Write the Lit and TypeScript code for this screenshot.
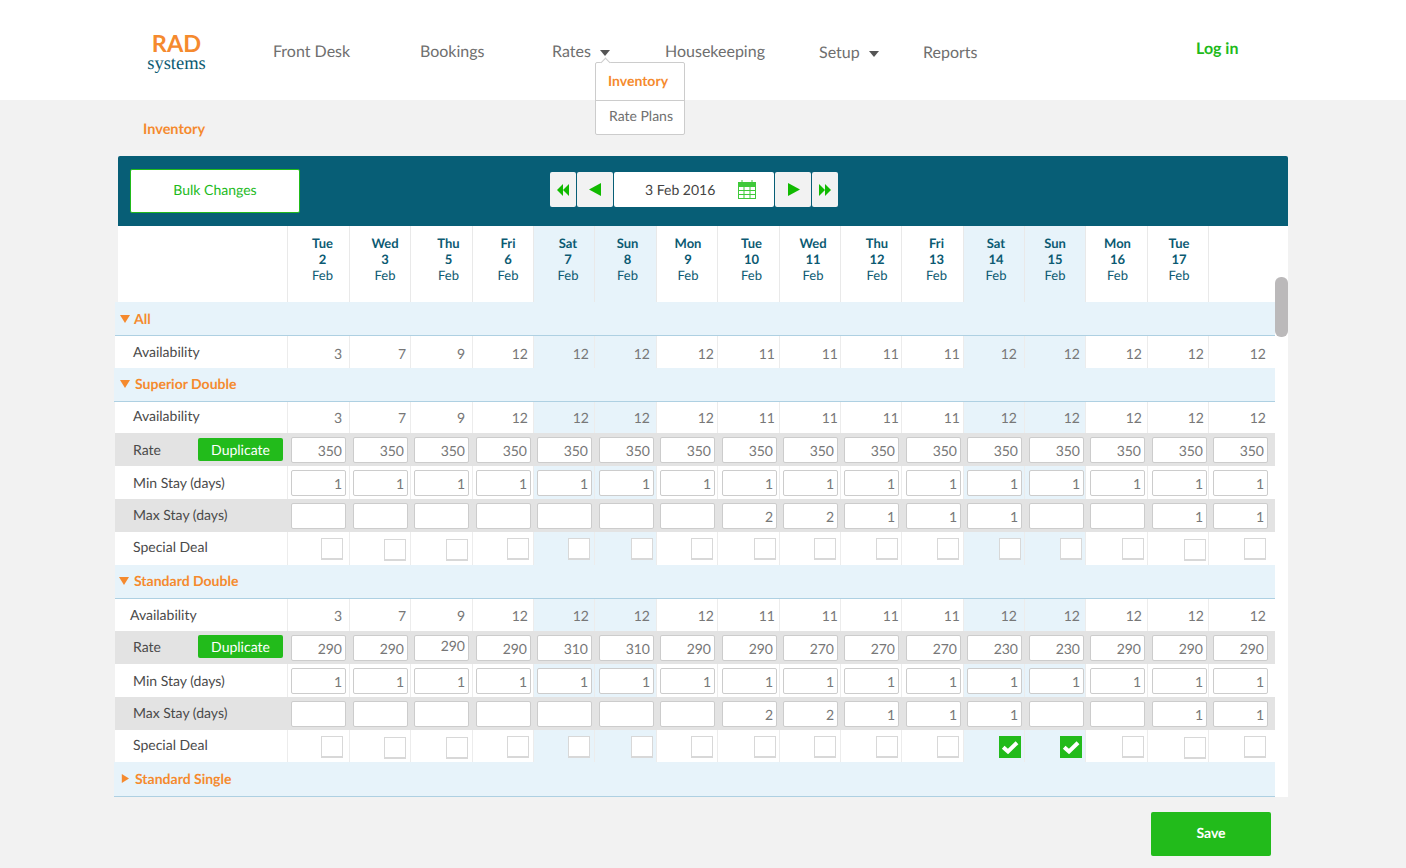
import { LitElement, html, css, svg } from "lit";
import { customElement } from "lit/decorators.js";

const colStart = [287, 349, 410, 472, 533, 594, 656, 717, 779, 840, 901, 963, 1024, 1085, 1147, 1208];
const colWidths = [62, 61, 62, 61, 61, 62, 61, 62, 61, 61, 62, 61, 61, 62, 61, 66];
const gridCols = "172px " + colWidths.map((w) => w + "px").join(" ");
const inputX = [291, 353, 414, 476, 537, 599, 660, 722, 783, 844, 906, 967, 1029, 1090, 1152, 1213];
const cbX = [321, 384, 446, 507, 568, 631, 691, 754, 814, 876, 937, 999, 1060, 1122, 1184, 1244];
const cbY = [0, 1, 1, 0, 0, 0, 0, 0, 0, 0, 0, 0, 0, 0, 1, 0];
const numRight = [342, 406, 465, 528, 589, 650, 714, 775, 838, 899, 960, 1017, 1080, 1142, 1204, 1266];
const weekend = new Set([4, 5, 11, 12]);
const days = [
  ["Tue", 2, 4], ["Wed", 3, 5], ["Thu", 5, 7], ["Fri", 6, 5], ["Sat", 7, 4], ["Sun", 8, 2], ["Mon", 9, 1], ["Tue", 10, 3],
  ["Wed", 11, 3], ["Thu", 12, 6], ["Fri", 13, 4], ["Sat", 14, 2], ["Sun", 15, 0], ["Mon", 16, 1], ["Tue", 17, 1],
] as [string, number, number][];
const avail = [3, 7, 9, 12, 12, 12, 12, 11, 11, 11, 11, 12, 12, 12, 12, 12];
const maxStay = ["", "", "", "", "", "", "", "2", "2", "1", "1", "1", "", "", "1", "1"];
const minStay = Array(16).fill("1");
const stdRates = [290, 290, 290, 290, 310, 310, 290, 290, 270, 270, 270, 230, 230, 290, 290, 290].map(String);
const supRates = Array(16).fill("350");

@customElement("app-root")
export class AppRoot extends LitElement {
  static styles = css`
    :host { display: block; width: 1406px; height: 868px; overflow: hidden; background: #f2f2f2; font-family: Lato, "Liberation Sans", sans-serif; font-size: 14px; color: #444; text-rendering: geometricPrecision; }
    * { box-sizing: border-box; }
    header { position: relative; height: 100px; background: #fff; display: flex; }
    .logo { margin-left: 147px; padding-top: 33px; display: flex; flex-direction: column; width: 59px; align-items: center; margin-right: 67px; }
    .logo .rad { font-size: 23.5px; font-weight: 700; line-height: 22px; color: #f58a2e; }
    .logo .sys { font-family: "Liberation Serif", serif; font-size: 18.5px; line-height: 15px; color: #0b5a72; margin-top: 2px; }
    nav { display: grid; grid-template-columns: 147px 132px 113px 154px 104px 273px auto; font-size: 16px; color: #6f6f6f; }
    nav .item { padding-top: 42px; line-height: 20px; display: flex; align-items: flex-start; }
    nav .low { padding-top: 43px; }
    nav .login { padding-top: 39px; font-weight: 700; color: #21ba1b; }
    .caret { width: 0; height: 0; border-left: 5.5px solid transparent; border-right: 5.5px solid transparent; border-top: 6px solid #555; margin: 8px 0 0 9px; }
    .dd { position: absolute; left: 595px; top: 62px; width: 90px; height: 73px; background: #fff; border: 1px solid #ccc; border-radius: 2px; z-index: 2; display: flex; flex-direction: column; }
    .dd::before { content: ""; position: absolute; left: 6px; top: -4px; width: 6px; height: 6px; background: #fff; border-left: 1px solid #ccc; border-top: 1px solid #ccc; transform: rotate(45deg); }
    .dd .a { height: 38px; padding: 9px 0 0 12px; color: #f58a2e; font-weight: 700; line-height: 18px; border-bottom: 1px solid #ccc; }
    .dd .b { padding: 6px 0 0 13px; color: #6f6f6f; line-height: 18px; }
    .title { height: 56px; padding: 21px 0 0 143px; color: #f58a2e; font-weight: 700; font-size: 14.5px; line-height: 18px; }
    .toolbar { margin-left: 118px; width: 1170px; height: 70px; background: #075e76; border-radius: 2px 2px 0 0; display: flex; padding: 13px 0 0 12px; }
    .bulk { width: 170px; height: 44px; background: #fff; border: 1px solid #21ba1b; border-radius: 2px; color: #21ba1b; display: flex; align-items: center; justify-content: center; margin-right: 250px; padding-bottom: 3px; }
    .pager { display: flex; gap: 1px; height: 35px; margin-top: 3px; }
    .pbtn { background: #f2f2f2; border-radius: 2px; display: flex; align-items: center; justify-content: center; }
    .w26 { width: 26px; } .w36 { width: 36px; }
    .prev { padding-right: 1px; } .next { padding-left: 1px; }
    .date { width: 160px; background: #fff; border-radius: 2px; display: flex; align-items: center; padding-left: 31px; color: #444; }
    .date svg { margin: 0 0 1px 23px; }
    .panel { display: flex; margin-left: 115px; width: 1173px; height: 571px; }
    .table { width: 1160px; }
    .track { width: 13px; background: #fff; padding-top: 51px; }
    .thumb { height: 60px; background: #bbb9ba; border-radius: 6px; }
    .row { display: grid; }
    .head { margin-left: 3px; height: 76px; background: #fff; }
    .hc { border-left: 1px solid #e9e9e9; background: #fff; color: #0b5a72; font-size: 13px; line-height: 16px; text-align: center; padding-top: 9px; }
    .hc b { display: block; font-weight: 700; }
    .hc span { display: block; }
    .cell.we, .hc.we { background: #e7f3fa; }
    .section { background: #e7f3fa; border-bottom: 1px solid #aed0e2; display: flex; align-items: center; color: #f58a2e; font-weight: 700; font-size: 14px; height: 34px; }
    .out { margin-left: -1px; }
    .data { background: #fff; }
    .lab { padding-left: 18px; display: flex; align-items: center; justify-content: space-between; color: #4a4a4a; padding-right: 4px; }
    .lab.ind { padding-left: 15px; }
    .grey { background: #e3e3e3; }
    .cell { border-left: 1px solid #ececec; display: flex; align-items: center; }
    .grey .cell { border-left: none; }
    .num { justify-content: flex-end; color: #777; }
    .inp { width: 55px; height: 26px; background: #fff; border: 1px solid #ccc; border-radius: 2px; color: #777; text-align: right; padding: 3px 3px 0 0; line-height: 20px; }
    .inp.hi { padding-top: 0; }
    .cb { width: 22px; height: 22px; background: #fff; border: 1px solid #d8d8d8; border-bottom-width: 2px; }
    .cb.on { background: #22bb1b; border: none; display: flex; align-items: center; justify-content: center; }
    .dup { width: 85px; height: 23px; background: #22bb1b; border-radius: 2px; color: #fff; display: flex; align-items: center; justify-content: center; padding-bottom: 1px; }
    .foot { display: flex; justify-content: flex-end; padding: 15px 135px 0 0; }
    .save { width: 120px; height: 44px; background: #22bb1b; border-radius: 2px; color: #fff; font-weight: 700; display: flex; align-items: center; justify-content: center; padding-bottom: 3px; }
  `;

  private heading(name: string, open: boolean, pad: number, gap: number, out: boolean, up: number, h = 34) {
    return html`<div class="section ${out ? "out" : ""}" style="padding-left:${pad}px;padding-bottom:${up}px;height:${h}px;${out ? "width:1161px" : ""}">
      <svg width="${open ? 10 : 8}" height="${open ? 8 : 9}" viewBox="0 0 10 9" style="margin-right:${gap}px" preserveAspectRatio="none">
        ${open ? svg`<polygon points="0,0 10,0 5,9" fill="#f58a2e"/>` : svg`<polygon points="1,0 10,4.5 1,9" fill="#f58a2e"/>`}
      </svg>${name}</div>`;
  }

  private availRow(h: number, up: number, numTop: number, ind = false) {
    return html`<div class="row data" style="grid-template-columns:${gridCols};height:${h}px">
      <div class="lab ${ind ? "ind" : ""}" style="padding-bottom:${up}px">Availability</div>
      ${avail.map((v, i) => html`<div class="cell num ${weekend.has(i) ? "we" : ""}" style="padding-right:${colStart[i] + colWidths[i] - numRight[i]}px;padding-top:${numTop}px">${v}</div>`)}
    </div>`;
  }

  private inputRow(label: string, vals: string[], grey: boolean, dup: boolean, up = 0, hi = -1) {
    return html`<div class="row ${grey ? "grey" : "data"}" style="grid-template-columns:${gridCols};height:33px">
      <div class="lab" style="padding-bottom:${up}px">${label}${dup ? html`<div class="dup">Duplicate</div>` : ""}</div>
      ${vals.map((v, i) => html`<div class="cell ${!grey && weekend.has(i) ? "we" : ""}" style="padding-left:${inputX[i] - colStart[i] - (grey ? 0 : 1)}px"><div class="inp ${i === hi ? "hi" : ""}">${v}</div></div>`)}
    </div>`;
  }

  private dealRow(h: number, top: number, on: number[] = []) {
    return html`<div class="row data" style="grid-template-columns:${gridCols};height:${h}px">
      <div class="lab" style="padding-bottom:4px">Special Deal</div>
      ${colStart.map((c, i) => html`<div class="cell ${weekend.has(i) ? "we" : ""}" style="padding-left:${cbX[i] - c - 1}px;padding-top:${cbY[i] * 2 + top}px">
        ${on.includes(i)
          ? html`<div class="cb on"><svg width="18" height="14" viewBox="0 0 18 14"><path d="M2.2 7.2 L7 11.5 L16 2.8" fill="none" stroke="#fff" stroke-width="4"/></svg></div>`
          : html`<div class="cb"></div>`}
      </div>`)}
    </div>`;
  }

  private arrows(dir: "l" | "r", n: number) {
    const pts = dir === "l"
      ? n === 2 ? ["6,0 0,6 6,12", "12,0 6,6 12,12"] : ["12,0 0,6.5 12,13"]
      : n === 2 ? ["0,0 6,6 0,12", "6,0 12,6 6,12"] : ["0,0 12,6.5 0,13"];
    return html`<svg width="12" height="${n === 2 ? 12 : 13}">${pts.map((p) => svg`<polygon points="${p}" fill="#11ba00"/>`)}</svg>`;
  }

  render() {
    return html`
      <header>
        <div class="logo"><div class="rad">RAD</div><div class="sys">systems</div></div>
        <nav>
          <div class="item">Front Desk</div>
          <div class="item">Bookings</div>
          <div class="item">Rates<span class="caret"></span></div>
          <div class="item">Housekeeping</div>
          <div class="item low">Setup<span class="caret"></span></div>
          <div class="item low">Reports</div>
          <div class="item login">Log in</div>
        </nav>
        <div class="dd"><div class="a">Inventory</div><div class="b">Rate Plans</div></div>
      </header>
      <div class="title">Inventory</div>
      <div class="toolbar">
        <div class="bulk">Bulk Changes</div>
        <div class="pager">
          <div class="pbtn w26">${this.arrows("l", 2)}</div>
          <div class="pbtn w36 prev">${this.arrows("l", 1)}</div>
          <div class="date">3 Feb 2016
            <svg width="18" height="19" viewBox="0 0 18 19" fill="none" stroke="#3fc93a" stroke-width="1">
              <rect x="0.5" y="2.5" width="17" height="16"/>
              <rect x="0.5" y="2.5" width="17" height="4" fill="#3fc93a"/>
              <path d="M4 0v3M14 0v3M0 10.5h18M0 14.5h18M6 6v13M12 6v13"/>
            </svg>
          </div>
          <div class="pbtn w36 next">${this.arrows("r", 1)}</div>
          <div class="pbtn w26">${this.arrows("r", 2)}</div>
        </div>
      </div>
      <div class="panel">
        <div class="table">
          <div class="row head" style="grid-template-columns:169px ${colWidths.join("px ")}px">
            <div></div>
            ${days.map(([d, n, off], i) => html`<div class="hc ${weekend.has(i) ? "we" : ""}" style="padding-left:${off * 2}px"><b>${d}</b><b>${n}</b><span>Feb</span></div>`)}
            <div class="hc"></div>
          </div>
          ${this.heading("All", true, 5, 4, false, 0)}
          ${this.availRow(32, 1, 3)}
          ${this.heading("Superior Double", true, 6, 5, true, 2)}
          ${this.availRow(31, 4, 0)}
          ${this.inputRow("Rate", supRates, true, true)}
          ${this.inputRow("Min Stay (days)", minStay, false, false)}
          ${this.inputRow("Max Stay (days)", maxStay, true, false, 2)}
          ${this.dealRow(33, 0)}
          ${this.heading("Standard Double", true, 4, 5, false, 2)}
          ${this.availRow(32, 2, 1, true)}
          ${this.inputRow("Rate", stdRates, true, true, 2, 2)}
          ${this.inputRow("Min Stay (days)", minStay, false, false)}
          ${this.inputRow("Max Stay (days)", maxStay, true, false, 2)}
          ${this.dealRow(32, 2, [11, 12])}
          ${this.heading("Standard Single", false, 7, 6, true, 2, 35)}
        </div>
        <div class="track"><div class="thumb"></div></div>
      </div>
      <div class="foot"><div class="save">Save</div></div>
    `;
  }
}
